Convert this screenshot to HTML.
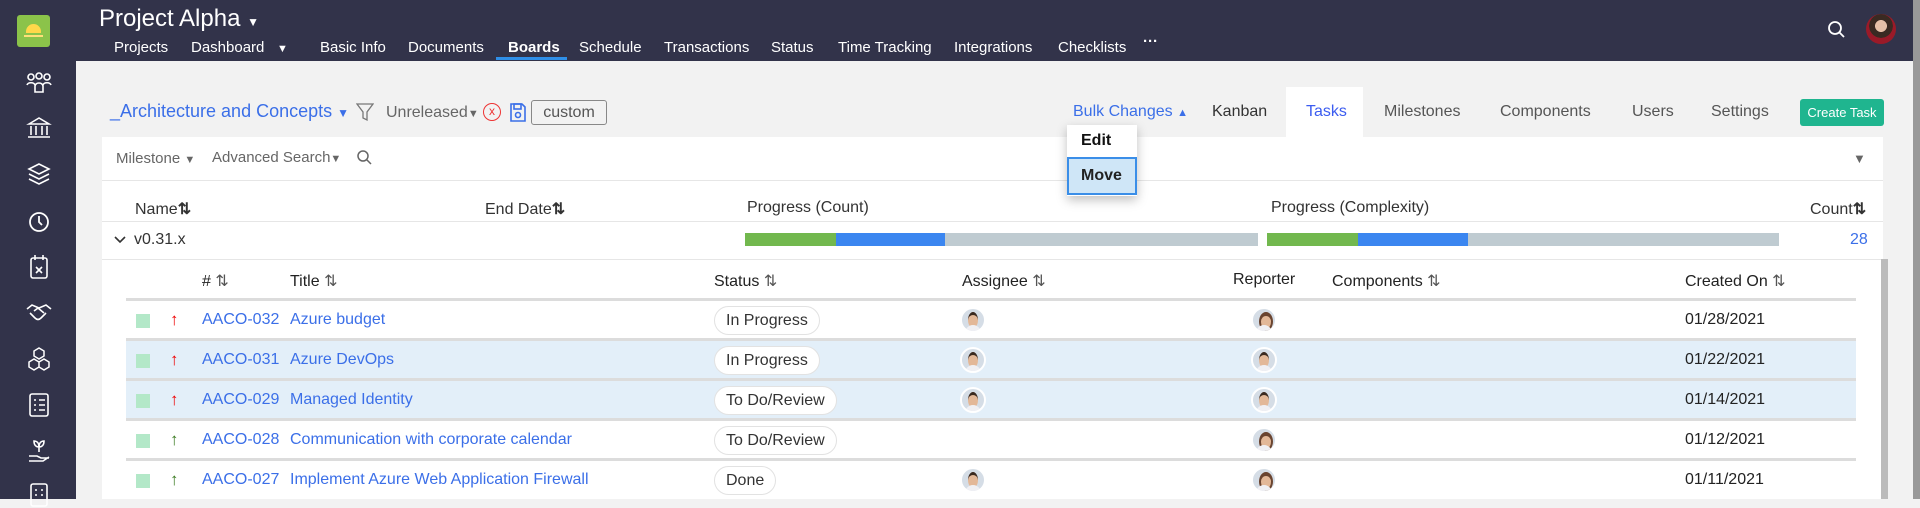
<!DOCTYPE html>
<html><head><meta charset="utf-8"><style>
*{box-sizing:border-box;margin:0;padding:0}
body{width:1920px;height:499px;overflow:hidden;background:#f2f2f2;font-family:"Liberation Sans",sans-serif;position:relative;color:#222}
.a{position:absolute;white-space:nowrap}
.top{left:0;top:0;width:1913px;height:61px;background:#32334a}
.side{left:0;top:0;width:76px;height:499px;background:#32334a}
.nav{top:39px;font-size:15px;color:#fff}
.si{left:26px}
.g{color:#666;font-size:16px}
.tab{top:103px;font-size:16px;color:#555}
.hd{font-size:16px;color:#333}
.th{font-size:16px;color:#222;top:271px}
.row{left:126px;width:1730px;height:40px;border-bottom:3px solid #dcdcdc}
.cell{font-size:16px}
.blue{color:#3b6fe8}
.pill{border:1px solid #e2e2e2;border-radius:15px;background:#fff;height:29px;line-height:27px;padding:0 11px;font-size:16px;color:#333}
.chk{width:14px;height:14px;background:#b3e8c8;left:136px}
.av{width:26px;height:26px;border-radius:50%;border:2px solid #fff;overflow:hidden;background:#d5dde6}
.av:before{content:"";position:absolute;left:6px;top:3px;width:10px;height:13px;border-radius:50%;background:#e3b898;border-top:3px solid #3a2a20}
.av:after{content:"";position:absolute;left:3px;top:16px;width:16px;height:10px;border-radius:8px 8px 0 0;background:#f0f0f4}
.av2:before{border:2px solid #6a4430;border-top-width:4px}
</style></head><body>
<div class="a top"></div>
<div class="a side"></div>
<div class="a" style="left:17px;top:15px;width:33px;height:32px;background:#8bc34a;border-radius:3px"></div>
<div class="a" style="left:26px;top:24px;width:15px;height:9px;border-radius:8px 8px 0 0;background:#ffd84a"></div>
<div class="a" style="left:24px;top:35px;width:19px;height:2px;background:#ffe07a"></div>
<svg class="a si" style="top:72px" width="26" height="22" fill="none" stroke="#fff" stroke-width="1.6"><circle cx="5" cy="5" r="3"/><circle cx="13" cy="4" r="3"/><circle cx="21" cy="5" r="3"/><path d="M1 13c1-3 7-3 8 0M9 20v-6c1-4 7-4 8 0v6zM17 13c1-3 7-3 8 0"/></svg>
<svg class="a si" style="top:116px" width="26" height="24" fill="none" stroke="#fff" stroke-width="1.6"><path d="M3 8L13 2l10 6zM5 10v9M10 10v9M16 10v9M21 10v9M2 21h22"/></svg>
<svg class="a si" style="top:162px" width="26" height="24" fill="none" stroke="#fff" stroke-width="1.6"><path d="M13 2L3 7l10 5 10-5zM3 12l10 5 10-5M3 17l10 5 10-5"/></svg>
<svg class="a si" style="top:210px" width="26" height="24" fill="none" stroke="#fff" stroke-width="1.8"><circle cx="13" cy="12" r="9"/><path d="M13 6v6l3 3"/></svg>
<svg class="a si" style="top:254px" width="26" height="26" fill="none" stroke="#fff" stroke-width="1.6"><rect x="5" y="4" width="16" height="20" rx="2"/><path d="M9 1v5M17 1v5M10 13l6 6M16 13l-6 6"/></svg>
<svg class="a si" style="top:301px" width="26" height="22" fill="none" stroke="#fff" stroke-width="1.6"><path d="M1 8l5-4 7 3 7-3 5 4M4 12l5 5c2 2 4 2 6 0l5-5M8 10l4-3 6 5"/></svg>
<svg class="a si" style="top:346px" width="26" height="26" fill="none" stroke="#fff" stroke-width="1.5"><path d="M13 2l5 3v5l-5 3-5-3V5zM8 13l5 3v5l-5 3-5-3v-5zM18 13l5 3v5l-5 3-5-3v-5z"/></svg>
<svg class="a si" style="top:392px" width="26" height="26" fill="none" stroke="#fff" stroke-width="1.6"><rect x="4" y="2" width="18" height="22" rx="2"/><path d="M8 8h2M13 8h6M8 13h2M13 13h6M8 18h2M13 18h6"/></svg>
<svg class="a si" style="top:438px" width="26" height="26" fill="none" stroke="#fff" stroke-width="1.6"><path d="M13 14V6M13 9c-3 0-5-2-5-6 3 0 5 2 5 6zM13 9c3 0 5-2 5-6-3 0-5 2-5 6zM3 18h8l4 2h8M3 23h14l6-4"/></svg>
<svg class="a si" style="top:482px" width="26" height="26" fill="none" stroke="#fff" stroke-width="1.6"><rect x="5" y="2" width="16" height="22" rx="2"/><path d="M9 8h2M15 8h2M9 13h2M15 13h2"/></svg>

<div class="a" style="left:99px;top:5px;font-size:24px;color:#fff">Project Alpha <span style="font-size:12px">&#9660;</span></div>
<div class="a nav" style="left:114px">Projects</div>
<div class="a nav" style="left:191px">Dashboard</div>
<div class="a nav" style="left:277px;font-size:11px;top:43px">&#9660;</div>
<div class="a nav" style="left:320px">Basic Info</div>
<div class="a nav" style="left:408px">Documents</div>
<div class="a nav" style="left:508px;font-weight:bold">Boards</div>
<div class="a" style="left:496px;top:57px;width:71px;height:3px;background:#2f8fe8"></div>
<div class="a nav" style="left:579px">Schedule</div>
<div class="a nav" style="left:664px">Transactions</div>
<div class="a nav" style="left:771px">Status</div>
<div class="a nav" style="left:838px">Time Tracking</div>
<div class="a nav" style="left:954px">Integrations</div>
<div class="a nav" style="left:1058px">Checklists</div>
<div class="a nav" style="left:1143px;top:33px;font-weight:bold">&middot;&middot;&middot;</div>
<svg class="a" style="left:1827px;top:20px" width="20" height="20"><circle cx="8" cy="8" r="6" fill="none" stroke="#fff" stroke-width="1.8"/><line x1="12.5" y1="12.5" x2="17" y2="17" stroke="#fff" stroke-width="1.8"/></svg>
<div class="a" style="left:1866px;top:14px;width:30px;height:30px;border-radius:50%;background:radial-gradient(circle at 50% 40%,#e6c0a8 0 25%,#3a2a22 26% 50%,#9a1a28 51%)"></div>
<div class="a" style="left:1913px;top:0;width:7px;height:499px;background:#999"></div>

<div class="a" style="left:110px;top:101px;font-size:18px;color:#3b6fe8">_Architecture and Concepts <span style="font-size:12px">&#9660;</span></div>
<svg class="a" style="left:356px;top:102px" width="18" height="20"><path d="M1 2h16l-6 8v8l-4-2v-6z" fill="none" stroke="#777" stroke-width="1.3"/></svg>
<div class="a g" style="left:386px;top:104px">Unreleased<span style="font-size:11px">&#9660;</span></div>
<div class="a" style="left:483px;top:103px;width:18px;height:18px;border:1.5px solid #e33;border-radius:50%;color:#e33;font-size:12px;text-align:center;line-height:15px">x</div>
<svg class="a" style="left:510px;top:103px" width="16" height="19" fill="none" stroke="#3b6fe8" stroke-width="1.6"><path d="M1 1h11l3 3v14H1z"/><rect x="4" y="1" width="7" height="5"/><circle cx="8" cy="12" r="2.5"/></svg>
<div class="a" style="left:531px;top:100px;width:76px;height:25px;border:1px solid #888;border-radius:3px;font-size:16px;color:#555;text-align:center;line-height:23px">custom</div>

<div class="a tab" style="left:1073px;color:#3b6fe8">Bulk Changes <span style="font-size:11px">&#9650;</span></div>
<div class="a" style="left:1286px;top:87px;width:77px;height:52px;background:#fff"></div>
<div class="a tab" style="left:1212px;color:#333">Kanban</div>
<div class="a tab" style="left:1306px;color:#3b5cf0">Tasks</div>
<div class="a tab" style="left:1384px">Milestones</div>
<div class="a tab" style="left:1500px">Components</div>
<div class="a tab" style="left:1632px">Users</div>
<div class="a tab" style="left:1711px">Settings</div>
<div class="a" style="left:1800px;top:99px;width:84px;height:27px;background:#1fb58f;border-radius:3px;color:#fff;font-size:13px;text-align:center;line-height:27px">Create Task</div>

<div class="a" style="left:102px;top:137px;width:1781px;height:362px;background:#fff"></div>
<div class="a g" style="left:116px;top:150px;font-size:15px">Milestone <span style="font-size:11px">&#9660;</span></div>
<div class="a g" style="left:212px;top:149px;font-size:15px">Advanced Search<span style="font-size:11px">&#9660;</span></div>
<svg class="a" style="left:356px;top:149px" width="17" height="17"><circle cx="7" cy="7" r="5" fill="none" stroke="#666" stroke-width="1.5"/><line x1="10.5" y1="10.5" x2="15" y2="15" stroke="#666" stroke-width="1.5"/></svg>
<div class="a" style="left:1853px;top:151px;font-size:13px;color:#666">&#9660;</div>
<div class="a" style="left:102px;top:180px;width:1781px;height:1px;background:#e6e6e6"></div>
<div class="a hd" style="left:135px;top:199px">Name<b>&#8645;</b></div>
<div class="a hd" style="left:485px;top:199px">End Date<b>&#8645;</b></div>
<div class="a hd" style="left:747px;top:199px">Progress (Count)</div>
<div class="a hd" style="left:1271px;top:199px">Progress (Complexity)</div>
<div class="a hd" style="left:1810px;top:199px">Count<b>&#8645;</b></div>
<div class="a" style="left:102px;top:221px;width:1781px;height:1px;background:#e6e6e6"></div>
<svg class="a" style="left:114px;top:235px" width="12" height="9"><path d="M1 2l5 5 5-5" fill="none" stroke="#333" stroke-width="1.6"/></svg>
<div class="a hd" style="left:134px;top:231px">v0.31.x</div>
<div class="a" style="left:745px;top:233px;width:513px;height:13px;background:#bfcbd1"><div style="position:absolute;left:0;width:91px;height:13px;background:#72b84e"></div><div style="position:absolute;left:91px;width:109px;height:13px;background:#3b86f0"></div></div>
<div class="a" style="left:1267px;top:233px;width:512px;height:13px;background:#bfcbd1"><div style="position:absolute;left:0;width:91px;height:13px;background:#72b84e"></div><div style="position:absolute;left:91px;width:110px;height:13px;background:#3b86f0"></div></div>
<div class="a blue" style="left:1850px;top:231px;font-size:16px">28</div>
<div class="a" style="left:102px;top:259px;width:1781px;height:1px;background:#e6e6e6"></div>
<div class="a" style="left:1881px;top:259px;width:7px;height:240px;background:#bbb"></div>
<div class="a" style="left:1888px;top:61px;width:25px;height:438px;background:#f2f2f2"></div>

<div class="a th" style="left:202px">#  <span style="color:#555">&#8645;</span></div>
<div class="a th" style="left:290px">Title <span style="color:#555">&#8645;</span></div>
<div class="a th" style="left:714px">Status <span style="color:#555">&#8645;</span></div>
<div class="a th" style="left:962px">Assignee <span style="color:#555">&#8645;</span></div>
<div class="a th" style="left:1233px">Reporter</div>
<div class="a th" style="left:1332px">Components <span style="color:#555">&#8645;</span></div>
<div class="a th" style="left:1685px">Created On <span style="color:#555">&#8645;</span></div>
<div class="a" style="left:126px;top:298px;width:1730px;height:3px;background:#dcdcdc"></div>

<div class="a row" style="top:301px"></div>
<div class="a row" style="top:341px;background:#e3eff9"></div>
<div class="a row" style="top:381px;background:#e3eff9"></div>
<div class="a row" style="top:421px"></div>

<div class="a chk" style="top:314px"></div><div class="a cell" style="left:170px;top:310px;color:#e00;font-size:17px;font-weight:bold">&#8593;</div>
<div class="a cell blue" style="left:202px;top:311px">AACO-032</div><div class="a cell blue" style="left:290px;top:311px">Azure budget</div>
<div class="a pill" style="left:714px;top:306px">In Progress</div>
<div class="a av" style="left:960px;top:307px"></div><div class="a av av2" style="left:1251px;top:307px"></div>
<div class="a cell" style="left:1685px;top:311px">01/28/2021</div>

<div class="a chk" style="top:354px"></div><div class="a cell" style="left:170px;top:350px;color:#e00;font-size:17px;font-weight:bold">&#8593;</div>
<div class="a cell blue" style="left:202px;top:351px">AACO-031</div><div class="a cell blue" style="left:290px;top:351px">Azure DevOps</div>
<div class="a pill" style="left:714px;top:346px">In Progress</div>
<div class="a av" style="left:960px;top:347px"></div><div class="a av" style="left:1251px;top:347px"></div>
<div class="a cell" style="left:1685px;top:351px">01/22/2021</div>

<div class="a chk" style="top:394px"></div><div class="a cell" style="left:170px;top:390px;color:#e00;font-size:17px;font-weight:bold">&#8593;</div>
<div class="a cell blue" style="left:202px;top:391px">AACO-029</div><div class="a cell blue" style="left:290px;top:391px">Managed Identity</div>
<div class="a pill" style="left:714px;top:386px">To Do/Review</div>
<div class="a av" style="left:960px;top:387px"></div><div class="a av" style="left:1251px;top:387px"></div>
<div class="a cell" style="left:1685px;top:391px">01/14/2021</div>

<div class="a chk" style="top:434px"></div><div class="a cell" style="left:170px;top:430px;color:#3a7a20;font-size:17px;font-weight:bold">&#8593;</div>
<div class="a cell blue" style="left:202px;top:431px">AACO-028</div><div class="a cell blue" style="left:290px;top:431px">Communication with corporate calendar</div>
<div class="a pill" style="left:714px;top:426px">To Do/Review</div>
<div class="a av av2" style="left:1251px;top:427px"></div>
<div class="a cell" style="left:1685px;top:431px">01/12/2021</div>

<div class="a chk" style="top:474px"></div><div class="a cell" style="left:170px;top:470px;color:#3a7a20;font-size:17px;font-weight:bold">&#8593;</div>
<div class="a cell blue" style="left:202px;top:471px">AACO-027</div><div class="a cell blue" style="left:290px;top:471px">Implement Azure Web Application Firewall</div>
<div class="a pill" style="left:714px;top:466px">Done</div>
<div class="a av" style="left:960px;top:467px"></div><div class="a av av2" style="left:1251px;top:467px"></div>
<div class="a cell" style="left:1685px;top:471px">01/11/2021</div>

<div class="a" style="left:1067px;top:125px;width:70px;height:71px;background:#fff;box-shadow:0 4px 10px rgba(0,0,0,.25)"></div>
<div class="a" style="left:1081px;top:132px;font-size:16px;font-weight:bold;color:#111">Edit</div>
<div class="a" style="left:1067px;top:157px;width:70px;height:38px;background:#cfe6f7;border:2px solid #3a8ee8;font-size:16px;font-weight:bold;color:#222;padding:8px 0 0 12px">Move</div>
</body></html>
